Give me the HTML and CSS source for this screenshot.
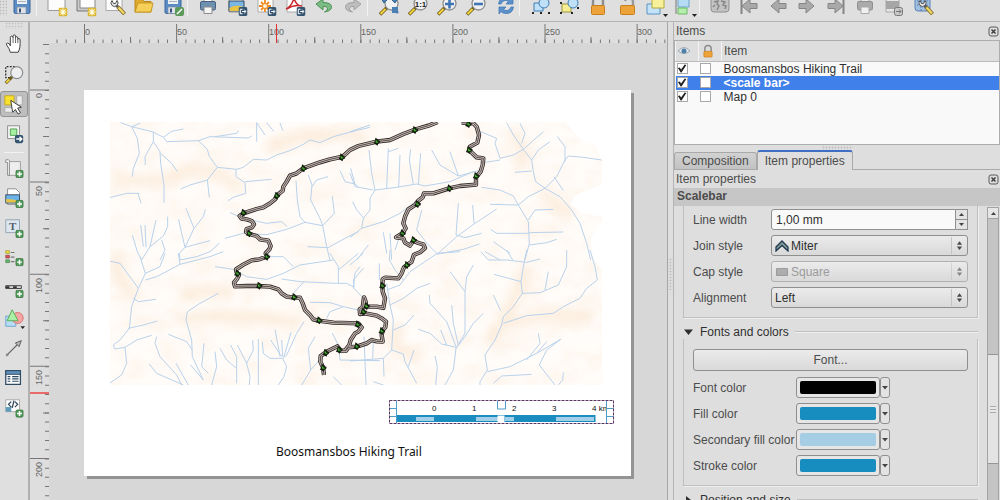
FILE: index.html
```html
<!DOCTYPE html>
<html lang="en">
<head>
  <meta charset="UTF-8">
  <meta name="viewport" content="width=device-width, initial-scale=1.0">
  <title>Composer</title>
  <link rel="stylesheet" href="styles.css">
</head>
<body>

  <!-- shared icon parts -->
  <svg class="defs" width="0" height="0" aria-hidden="true">
    <symbol id="star" viewBox="0 0 10 10">
      <rect width="10" height="10" rx="2" fill="#d9b52c"/>
      <path d="M5 1v8M1 5h8M2.2 2.2l5.6 5.6M7.8 2.2l-5.6 5.6" stroke="#fffbe0" stroke-width="1.2"/>
    </symbol>
    <symbol id="plus" viewBox="0 0 10 10">
      <rect x=".5" y=".5" width="9" height="9" rx="2" fill="#4f9a58" stroke="#39723f"/>
      <path d="M5 2v6M2 5h6" stroke="#fff" stroke-width="1.8"/>
    </symbol>
    <symbol id="export" viewBox="0 0 10 10">
      <rect width="10" height="10" rx="2" fill="#355470"/>
      <path d="M4.500 2.500H2v5h2.500M4 5h4M6.300 3l2 2-2 2" fill="none" stroke="#fff" stroke-width="1.1"/>
    </symbol>
    <symbol id="floppy" viewBox="0 0 24 24">
      <rect x="4" y="3" width="16" height="18.500" rx="1.500" fill="#5b8cc4" stroke="#3a649c"/>
      <path d="M7 3h10v9H7z" fill="#eef1f4"/><path d="M8 7h8M8 9.500h8" stroke="#aab3bd"/>
      <path d="M7 15h9v6.500H7z" fill="#dfe3e8" stroke="#7c8ea5" stroke-width=".7"/>
      <path d="M9 16.500h2v4H9z" fill="#38517a"/>
    </symbol>
    <symbol id="lens" viewBox="0 0 24 24">
      <path d="M3 22.500l7-7" stroke="#6c5b1c" stroke-width="3.600"/>
      <path d="M3.500 22l5-5" stroke="#f4d53c" stroke-width="2"/>
      <circle cx="14.500" cy="11.500" r="6.500" fill="#f0f1f2" stroke="#8d8d8d" stroke-width="1.300"/>
    </symbol>
    <symbol id="wrench" viewBox="0 0 24 24">
      <path d="M11 12l3 3" stroke="#555" stroke-width="3"/>
      <path d="M8 8.500a3.500 3.500 0 1 0 5 0l-1.500 3-2 0z" fill="#e6e6e6" stroke="#555"/>
      <path d="M14 15l6.500 7" stroke="#806820" stroke-width="4"/>
      <path d="M14.500 15.500l5.500 6" stroke="#f1d96a" stroke-width="2.200"/>
    </symbol>
    <symbol id="arrow" viewBox="0 0 24 24">
      <path d="M5 14l8-7v4.500h7v5h-7V21z" fill="#a9a9a9" stroke="#858585"/>
    </symbol>
    <symbol id="lock" viewBox="0 0 24 24">
      <path d="M7 14V9.500a5 5 0 0 1 10 0V14" fill="none" stroke="#8d8d8d" stroke-width="2.400"/>
      <rect x="5.500" y="13.500" width="13" height="9" rx="1" fill="#eda23a" stroke="#c77f1c"/>
    </symbol>
    <symbol id="close" viewBox="0 0 11 11">
      <rect x="1" y="1" width="9" height="9" rx="2" fill="none" stroke="#5a5a5a"/>
      <path d="M3.500 3.500l4 4M7.500 3.500l-4 4" stroke="#3e3e3e" stroke-width="1.500"/>
    </symbol>
    <symbol id="updown" viewBox="0 0 8 12">
      <path d="M4 1L7 5H1zM4 11L7 7H1z" fill="#4a4a4a"/>
    </symbol>
    <symbol id="marker" viewBox="-8 -10 16 20" overflow="visible">
      <path d="M-3 -10L3 -6 5 -3 9 -2 8 3 4 5 2 10 -4 6 -8 5 -5 0z" fill="#151c10"/>
      <path d="M-3 -3h4v3h3v3h-6z" fill="#3db52a"/>
    </symbol>
  </svg>

  <div class="app">
    <div class="toolbar">
      <span class="grip"></span>
      <button class="tool" aria-label="Save project"><svg><use href="#floppy"/></svg></button>
      <span class="sep"></span>
      <button class="tool" aria-label="New composer"><svg viewBox="0 0 24 24"><path d="M3 2h17v16.500H3z" fill="#fcfcfc" stroke="#9a9a9a"/><use href="#star" x="13.500" y="15.500" width="9" height="9"/></svg></button>
      <button class="tool" aria-label="Duplicate composer"><svg viewBox="0 0 24 24"><path d="M3 2h15v17H3z" fill="#c9c9c9" stroke="#777"/><path d="M6 2h15v14H6z" fill="#fcfcfc" stroke="#888"/><use href="#star" x="13.500" y="15.500" width="9" height="9"/></svg></button>
      <button class="tool" aria-label="Composer manager"><svg viewBox="0 0 24 24"><path d="M3 2h16v16.500H3z" fill="#fcfcfc" stroke="#aaa"/><use href="#wrench" x="1" y="0" width="24" height="24"/></svg></button>
      <button class="tool" aria-label="Add items from template"><svg viewBox="0 0 24 24"><path d="M3 20V7h7l2 2.500h7V20z" fill="#e0a92c" stroke="#b98818"/><path d="M3 20l3-9h15l-2 9z" fill="#f6cf58" stroke="#c79a26"/></svg></button>
      <button class="tool" aria-label="Save as template"><svg viewBox="0 0 24 24"><use href="#floppy" width="24" height="24"/><rect x="14" y="15" width="9" height="9" rx="2" fill="#5c9a5c"/><path d="M16 22l5-5" stroke="#fff" stroke-width="1.500"/></svg></button>
      <span class="sep"></span>
      <button class="tool" aria-label="Print"><svg viewBox="0 0 24 24"><path d="M8 3h8v7H8z" fill="#fff" stroke="#8c8c8c"/><rect x="4.500" y="9.500" width="15" height="8.500" rx="1.500" fill="#6d8fb0" stroke="#46617e"/><path d="M8 15h8v6.500H8z" fill="#f4f4f4" stroke="#8c8c8c"/></svg></button>
      <button class="tool" aria-label="Export as image"><svg viewBox="0 0 24 24"><path d="M4 3h14v17H4z" fill="#fff" stroke="#999"/><path d="M4 9h15v10H4z" fill="#79b6e6" stroke="#33485c"/><path d="M4.500 16q6-4 14-1v4h-14z" fill="#e8c443"/><use href="#export" x="13.500" y="15" width="9" height="9"/></svg></button>
      <button class="tool" aria-label="Export as SVG"><svg viewBox="0 0 24 24"><path d="M4 3h15v17H4z" fill="#fff" stroke="#aaa"/><path d="M11 8v12M5 14h12M7 10l8 8M15 10l-8 8" stroke="#ef8a1e" stroke-width="1.800"/><circle cx="11" cy="14" r="2.500" fill="#fff3da" stroke="#ef8a1e"/><use href="#export" x="13.500" y="15" width="9" height="9"/></svg></button>
      <button class="tool" aria-label="Export as PDF"><svg viewBox="0 0 24 24"><path d="M4 3h15v17H4z" fill="#fff" stroke="#aaa"/><path d="M3 17q6-3 8-11q2 8 8 8q-8-2-15 3" fill="none" stroke="#c8282d" stroke-width="1.500"/><use href="#export" x="13.500" y="15" width="9" height="9"/></svg></button>
      <button class="tool" aria-label="Undo"><svg viewBox="0 0 24 24"><path d="M4 12l7-5v3.500q9 0 8.500 5-.5 3.500-7 4.500 4-2 3-4t-4.500-1.500V18z" fill="#7dbb84" stroke="#4b9257"/></svg></button>
      <button class="tool" aria-label="Redo"><svg viewBox="0 0 24 24"><path d="M20 12l-7-5v3.500q-9 0-8.500 5 .5 3.500 7 4.500-4-2-3-4t4.500-1.500V18z" fill="#bdbdbd" stroke="#a2a2a2"/></svg></button>
      <span class="sep wide"></span>
      <button class="tool" aria-label="Zoom full"><svg viewBox="0 0 24 24"><use href="#lens" width="24" height="24"/><path d="M4 6l7 1-4 4zM21 6l-7 1 4 4zM21 21l-6-1 5-5z" fill="#4b80b5" stroke="#33618e"/><path d="M15 15h6v6h-6z" fill="#4b80b5"/></svg></button>
      <button class="tool" aria-label="Zoom 1:1"><svg viewBox="0 0 24 24"><use href="#lens" width="24" height="24"/><text class="ratio" x="14.500" y="15" text-anchor="middle">1:1</text></svg></button>
      <button class="tool" aria-label="Zoom in"><svg viewBox="0 0 24 24"><use href="#lens" width="24" height="24"/><path d="M14.500 7.500v9M10 12h9" stroke="#3f74b5" stroke-width="2.600"/></svg></button>
      <button class="tool" aria-label="Zoom out"><svg viewBox="0 0 24 24"><use href="#lens" width="24" height="24"/><path d="M10 12h9" stroke="#3f74b5" stroke-width="2.600"/></svg></button>
      <button class="tool" aria-label="Refresh"><svg viewBox="0 0 24 24"><path d="M5.500 12q1-7 8-6.500 3 0 4.500 2l2-2v6.500h-7l2.500-2.500q-5-3-7.500 2.500zM20.500 15q-1 7-8 6.500-3 0-4.500-2l-2 2.500V15h7l-2.500 2.500q5 3 7.500-2.500z" fill="#5b92ce" stroke="#3d71ad" stroke-width=".7"/></svg></button>
      <span class="sep"></span>
      <button class="tool" aria-label="Group"><svg viewBox="0 0 24 24"><path d="M6 11h9v8H6z" fill="#bfe0f7" stroke="#3d7fb8"/><circle cx="16" cy="11" r="5" fill="#bfe0f7" stroke="#3d7fb8"/><path d="M4 20h2v2H4zM20 20h2v2h-2zM20 5h2v2h-2zM4 5h2v2H4zM12 20h2v2h-2z" fill="#222"/></svg></button>
      <button class="tool" aria-label="Ungroup"><svg viewBox="0 0 24 24"><path d="M5 12h9v8H5z" fill="#f6ee8f" stroke="#9c9340"/><circle cx="16" cy="11" r="5" fill="#bfe0f7" stroke="#3d7fb8"/><path d="M3 10h2v2H3zM3 20h2v2H3zM14 20h2v2h-2zM20 5h2v2h-2zM10 5h2v2h-2zM20 15h2v2h-2z" fill="#222"/></svg></button>
      <button class="tool" aria-label="Lock"><svg><use href="#lock"/></svg></button>
      <button class="tool" aria-label="Unlock"><svg viewBox="0 0 24 24"><path d="M10 9q1-3 4-3 4 0 4 4v4" fill="none" stroke="#9a9a9a" stroke-width="2.400"/><rect x="5.500" y="13.500" width="14" height="9" rx="1" fill="#eda23a" stroke="#c77f1c"/></svg></button>
      <button class="tool" aria-label="Raise"><svg viewBox="0 0 24 24"><path d="M3 12h13v10H3z" fill="#c5e3f8" stroke="#5893c4"/><path d="M8 3h12v13H8z" fill="#f8f19c" stroke="#b5a93e"/><path d="M19 22h5l-2.500 3z" fill="#222"/></svg></button>
      <button class="tool" aria-label="Align"><svg viewBox="0 0 24 24"><path d="M3 3v19" stroke="#777"/><path d="M5 3h11v12H5z" fill="#b6dcf5" stroke="#6aa2cf"/><path d="M5 16h9v6H5z" fill="#b4f0ac" stroke="#6cb964"/><path d="M19 22h5l-2.500 3z" fill="#222"/></svg></button>
      <span class="sep"></span>
      <button class="tool" aria-label="Preview atlas"><svg viewBox="0 0 24 24"><rect x="3" y="6" width="18" height="14" rx="3" fill="#c3c3c3" stroke="#8f8f8f"/><path d="M6 10l4-1-1 3 2 2-2 4M13 9l4 1-2 3 3 1-1 3M7 13l-2 2" fill="none" stroke="#858585" stroke-width="1.400"/></svg></button>
      <button class="tool" aria-label="First feature"><svg viewBox="0 0 24 24"><path d="M4.500 5v17" stroke="#858585" stroke-width="2"/><use href="#arrow" width="24" height="24"/></svg></button>
      <button class="tool" aria-label="Previous feature"><svg><use href="#arrow"/></svg></button>
      <button class="tool" aria-label="Next feature"><svg viewBox="0 0 24 24"><use href="#arrow" width="24" height="24" transform="matrix(-1 0 0 1 24 0)"/></svg></button>
      <button class="tool" aria-label="Last feature"><svg viewBox="0 0 24 24"><path d="M19.500 5v17" stroke="#858585" stroke-width="2"/><use href="#arrow" width="24" height="24" transform="matrix(-1 0 0 1 24 0)"/></svg></button>
      <button class="tool" aria-label="Print atlas"><svg viewBox="0 0 24 24"><path d="M8 3h8v7H8z" fill="#e8e8e8" stroke="#aaa"/><rect x="4.500" y="9.500" width="15" height="8.500" rx="1.500" fill="#aaa" stroke="#909090"/><path d="M8 15h8v6.500H8z" fill="#f0f0f0" stroke="#aaa"/></svg></button>
      <button class="tool" aria-label="Export atlas"><svg viewBox="0 0 24 24"><path d="M4 3h13v17H4z" fill="#e6e6e6" stroke="#aaa"/><path d="M4 9h13v8H4z" fill="#a6a6a6"/><rect x="12.500" y="15.500" width="8" height="8" rx="2" fill="#c9c9c9" stroke="#777"/><path d="M14 19.500h5M17 17.500l2 2-2 2" fill="none" stroke="#777"/></svg></button>
      <button class="tool" aria-label="Atlas settings"><svg viewBox="0 0 24 24"><rect x="4" y="5" width="15" height="14" rx="3" fill="#9fc0e2" stroke="#5b83b0"/><path d="M6 9h11M6 13h11M10 5v14" stroke="#5b83b0" stroke-dasharray="2 1"/><use href="#wrench" x="1" y="0" width="24" height="24"/></svg></button>
    </div>

    <div class="main">
      <div class="sidebar">
        <span class="grip"></span>
        <button class="tool" aria-label="Pan"><svg viewBox="0 0 24 24"><path d="M8 21q-1-4-4-8-1-2 1-2t3 3V5q0-1.500 1.300-1.500T11 5V3.500Q11 2 12.300 2t1.400 1.500V5q0-1 1.200-1t1.300 1.500V7q0-1 1.200-1t1.200 1.500q.6 9-2 13.500z" fill="#fff" stroke="#333"/><path d="M11 5v6M13.700 5v6M16.200 7v4" stroke="#333" stroke-width=".8"/></svg></button>
        <button class="tool" aria-label="Zoom"><svg viewBox="0 0 24 24"><path d="M13 4H3v12h6" fill="none" stroke="#222" stroke-width="1.300" stroke-dasharray="2 1.500"/><path d="M3 22l7-7" stroke="#6c5b1c" stroke-width="3.400"/><path d="M3.500 21.500l3.500-3.500" stroke="#f4d53c" stroke-width="2"/><circle cx="15" cy="10.500" r="6.500" fill="#eceeef" stroke="#8d8d8d" stroke-width="1.300"/></svg></button>
        <button class="tool active" aria-label="Select item"><svg viewBox="0 0 24 24"><path d="M2 3h10v10H2z" fill="#f9e12f" stroke="#c7a71b"/><path d="M15 3h6v10h-6z" fill="#eee" stroke="#aaa"/><path d="M2 16h11v5H2z" fill="#eee" stroke="#aaa"/><path d="M8.500 8l2 13 3-3 3 5 2.500-1.500-3-5 4-1z" fill="#fff" stroke="#333"/></svg></button>
        <button class="tool" aria-label="Move content"><svg viewBox="0 0 24 24"><path d="M5 3h13v14H5z" fill="#f4f4f4" stroke="#888"/><path d="M8 6.500h7v7H8z" fill="#a6efa2" stroke="#4da04a"/><rect x="13" y="13" width="9" height="9" rx="2" fill="#355470"/><path d="M14.500 17.500h5M18 15l2.500 2.500L18 20" fill="none" stroke="#fff" stroke-width="1.500"/></svg></button>
        <span class="line"></span>
        <button class="tool" aria-label="Add map"><svg viewBox="0 0 24 24"><path d="M6 5h13v15H6z" fill="#eee" stroke="#999"/><path d="M3 3h3q2 1 1 3v14H5V6H3z" fill="#f6f6f6" stroke="#888"/><use href="#plus" x="13.500" y="14" width="9" height="9"/></svg></button>
        <button class="tool" aria-label="Add image"><svg viewBox="0 0 24 24"><path d="M5 2h9l4 4v13H5z" fill="#fff" stroke="#888"/><path d="M3 8.500h15v9H3z" fill="#6cb3e8" stroke="#33485c"/><path d="M3.500 13q7 0 14 2v2h-14z" fill="#e8c443"/><use href="#plus" x="13.500" y="14" width="9" height="9"/></svg></button>
        <button class="tool" aria-label="Add label"><svg viewBox="0 0 24 24"><path d="M3 3h15v14H3z" fill="#dce6ee" stroke="#93a3b0"/><text class="letter" x="10.500" y="14" text-anchor="middle">T</text><use href="#plus" x="13.500" y="14" width="9" height="9"/></svg></button>
        <button class="tool" aria-label="Add legend"><svg viewBox="0 0 24 24"><path d="M3 4h4v3H3z" fill="#f2e13c" stroke="#99902c" stroke-width=".7"/><path d="M3 9h4v3H3z" fill="#d8545c" stroke="#8d353a" stroke-width=".7"/><path d="M3 14h4v3H3z" fill="#63b96c" stroke="#3d7f44" stroke-width=".7"/><path d="M8.500 6h4M8.500 11h4M8.500 16h4" stroke="#777" stroke-width="1.200"/><use href="#plus" x="13.500" y="12" width="9" height="9"/></svg></button>
        <button class="tool" aria-label="Add scalebar"><svg viewBox="0 0 24 24"><path d="M3 9.500h17v3H3z" fill="#ddd" stroke="#333"/><path d="M3 11h4M11 11h4" stroke="#333" stroke-width="2"/><use href="#plus" x="13.500" y="14" width="9" height="9"/></svg></button>
        <button class="tool" aria-label="Add shape"><svg viewBox="0 0 24 24"><path d="M3 10h11v11H3z" fill="#b7dcf5" stroke="#6aa2cf"/><circle cx="16" cy="12" r="6" fill="#f6a6a4" stroke="#d2716f"/><path d="M10 3l6.500 12h-12z" fill="#a9efa6" stroke="#55a552"/><path d="M19 21h5l-2.500 3z" fill="#222"/></svg></button>
        <button class="tool" aria-label="Add arrow"><svg viewBox="0 0 24 24"><path d="M4 20L17 7" stroke="#666" stroke-width="1.400"/><path d="M20 4l-2.500 6.500-4-4z" fill="#bbb" stroke="#555"/><circle cx="4.500" cy="19.500" r="1.500" fill="#888"/></svg></button>
        <button class="tool" aria-label="Add attribute table"><svg viewBox="0 0 24 24"><path d="M3 4h16v15H3z" fill="#fff" stroke="#2f4a63" stroke-width="1.400"/><path d="M3 4h16v4H3z" fill="#5f8fb9" stroke="#2f4a63"/><path d="M5 10.500h3M5 13h3M5 15.500h3M10 10.500h7M10 13h7M10 15.500h7" stroke="#2f4a63" stroke-width="1.200"/></svg></button>
        <button class="tool" aria-label="Add HTML frame"><svg viewBox="0 0 24 24"><path d="M3 3h15v13H3z" fill="#fff" stroke="#a5a5a5"/><path d="M3 11h6v5H3z" fill="#5f9dbb"/><path d="M9 5L6 8l3 3M13 5l3 3-3 3M12 4l-2 8" fill="none" stroke="#33485c" stroke-width="1.400"/><use href="#plus" x="13.500" y="13.500" width="9" height="9"/></svg></button>
      </div>

      <div class="workspace">
        <svg class="ruler-top">
          <path d="M26.500 19.500H640" class="minor"/>
          <path d="M100 18H640" class="half"/>
          <path d="M54 11.500H640" class="major"/>
          <text x="55" y="13">0</text><text x="147" y="13">50</text><text x="239" y="13">100</text>
          <text x="331" y="13">150</text><text x="423" y="13">200</text><text x="515" y="13">250</text><text x="607" y="13">300</text>
          <path d="M246.500 2v19" class="cursor"/>
        </svg>
        <svg class="ruler-left">
          <path d="M17 1V460" class="minor"/>
          <path d="M16 1V460" class="half"/>
          <path d="M9.500 46.500V460" class="major"/>
          <text transform="translate(12 55) rotate(-90)">0</text>
          <text transform="translate(12 153) rotate(-90)">50</text>
          <text transform="translate(12 250) rotate(-90)">100</text>
          <text transform="translate(12 342) rotate(-90)">150</text>
          <text transform="translate(12 434) rotate(-90)">200</text>
          <path d="M0 350h19" class="cursor"/>
        </svg>

        <div class="canvas">
          <div class="paper">
            <svg class="map" viewBox="30 36 1476 789" role="img" aria-label="Map 0">
              <defs>
                <filter id="soft" x="-10%" y="-10%" width="120%" height="120%"><feGaussianBlur stdDeviation="14"/></filter>
                <filter id="relief" x="0" y="0" width="100%" height="100%">
                  <feTurbulence type="fractalNoise" baseFrequency=".012 .018" numOctaves="4" seed="8"/>
                  <feColorMatrix values="0 0 0 0 .98  0 0 0 0 .88  0 0 0 0 .78  1.200 0 0 0 -.42"/>
                </filter>
              </defs>
              <rect x="30" y="36" width="1476" height="789" fill="#fffcf9"/>
              <rect x="30" y="36" width="1476" height="789" filter="url(#relief)"/>
              <g class="hills" filter="url(#soft)">
                <path d="M40 200Q150 230 240 190T420 240"/><path d="M240 560Q330 530 400 550"/><path d="M240 630Q400 600 600 640"/>
                <path d="M500 110Q640 60 800 80"/><path d="M1330 240Q1380 320 1420 300"/><path d="M1200 650Q1360 600 1480 620"/>
                <path d="M1160 700Q1230 620 1280 470"/><path d="M900 650Q850 720 960 740"/><path d="M1230 70Q1300 120 1250 170"/>
                <path d="M60 420Q30 500 110 560"/>
              </g>
              <path d="M1506 36v120l-20-50-40-15-30-30-20-25zM1506 225l-30 10-50 20-15 30 40 25 55 10zM1506 330l-35 60 10 60 25 30z" fill="#fff"/>
              <g class="rivers">
                <path d="M62 38L95 50 120 40M95 50L160 66 190 82 215 64 250 57M190 82L200 95 295 92 330 80 445 84 455 78M345 80L410 70 415 62"/>
                <path d="M95 50L112 85 118 130 100 175 97 200M160 66V95L180 125 182 160 192 225V278M160 95L135 140 136 165M182 130L215 160 232 185"/>
                <path d="M295 92L322 118 328 140 352 172 410 178 430 172 460 148 500 150 530 135 570 122 610 103 630 90 660 98 700 80 775 60 810 52"/>
                <path d="M352 172L322 210 270 225 242 237M322 210L328 262M408 178V200L435 218 437 250 400 262 384 272M435 215L515 208"/>
                <path d="M28 263L80 250H118M114 250L123 280M470 38V95M470 38L495 75M500 38L522 65M540 38L548 62"/>
                <path d="M97 375L112 425 125 450 150 410 190 378 203 350V320M122 345L130 410M135 345L138 412M168 330L150 410M185 390L195 420 180 450"/>
                <path d="M236 328L245 370 255 412 238 430 240 450M258 295L282 355 310 320 316 298M282 355L255 412 330 392M375 385L430 370 500 374 560 358 615 337 668 347"/>
                <path d="M390 308L430 325 500 340 545 335 562 350M588 212L592 270 600 320 615 337M625 195L636 225 632 270 660 325 668 347 680 410 690 450M636 230L650 210 684 200M697 258L703 310 668 347M622 410L684 413 735 385 775 365"/>
                <path d="M720 182L735 215 765 222 775 230M752 175L765 222M358 400L330 425 290 440 240 450"/>
                <path d="M28 453L60 460 115 535 136 490 120 440M136 510L170 500 240 463 330 440 370 425M136 490L180 470 195 430M240 463L235 430"/>
                <path d="M115 535L95 590 88 655 60 690 40 705 45 717 75 712 110 690 155 676M100 565L115 575 168 568M85 655L130 645 172 633M75 712L80 760 65 795 28 820"/>
                <path d="M355 550L300 580 262 605 258 630 275 690 277 740 310 810M205 673L260 695 277 720M170 680L165 700 180 740 230 795 245 825M148 762L170 790 250 825M228 760L265 825M312 700L305 770 325 790M272 765L310 810"/>
                <path d="M345 725L350 770 335 825M360 715L380 750 410 775V820M392 705L410 740V775M412 705L440 760 450 800 448 825M440 760L460 720 458 690M475 687V825M487 695L490 730 510 745 548 745 560 735 590 670 612 635"/>
                <path d="M512 690L545 740M525 658L540 740M545 690L548 740M573 667L552 740M548 745L560 770 552 800 535 825M645 680L625 715 632 780 605 825M632 780L658 750"/>
                <path d="M345 470L400 478 440 500 500 508 550 490 600 465 700 450M500 440L550 440 580 470M545 507L600 515 710 520 740 520 760 530M715 520L715 470 690 430M715 480L775 430M760 535L765 490 780 470M580 550L612 515"/>
                <path d="M630 577L690 578 730 590 775 600M680 625L690 605 730 590M697 670L715 705 720 750 840 752M700 800L725 825"/>
              </g>
              <g class="rivers" transform="translate(750 0)">
                <path d="M380 60L440 85 435 100 450 145 490 135 520 118 545 150 550 185 557 215 585 235 620 200 645 150 655 138 700 142 755 150"/>
                <path d="M470 38L490 75 520 118 580 65M510 40L525 70 515 100M400 158L450 150M622 80L645 110 645 155M600 95L565 120 545 150M495 187L545 183M612 200L640 242"/>
                <path d="M57 120L65 190 75 240 140 232 200 222 225 228 300 215 370 185M115 115L110 235M115 125L145 115M150 135L146 232M182 118L178 150 190 225M212 130L205 225M245 120L270 165 325 198 300 125M325 198L400 178"/>
                <path d="M75 240L60 265 60 300 40 325 35 355 0 382M8 275L20 300 42 325M35 355L100 335 150 310 200 272M0 190L15 230 70 240M0 65L60 45"/>
                <path d="M395 232L450 240 490 258 505 285 535 260 585 235M505 285L420 283M505 285L535 335 538 400 525 450M535 330L555 300 610 298M538 368L640 366M538 370L440 370 422 358M538 405L590 398 620 388"/>
                <path d="M585 235L630 260 665 300 690 340 710 400 722 450M215 300L200 360 235 405 262 432 320 380 375 340 440 297M325 280L318 375 345 383 395 370M368 285L372 340M262 432L340 418 388 402M100 367L110 430M120 370L125 450M150 375L135 420M55 405L20 450M405 425L450 450M430 395L480 430"/>
              </g>
              <g class="rivers" transform="translate(750 420)">
                <path d="M393 5L415 30 470 30 530 37 570 27M470 0L488 30M530 0L520 50 513 95 517 130 570 128 625 105 650 50 650 0M595 65L585 120M432 73L513 95M517 130L490 170 460 200 455 225 435 270 405 315 412 360 390 395 390 405"/>
                <path d="M720 0L735 50 742 90 710 115 690 145 640 170 610 190 530 197 460 220M412 365L480 350 520 330 560 310 632 268M565 250L570 280 530 330M590 275L560 310M632 268L590 300 568 345 615 405M640 367L638 390 625 405M430 400L455 378 545 373"/>
                <path d="M300 65L345 125 350 80 370 45M345 125V250L318 295 310 360 285 405M400 190L370 220 345 260 318 295M238 135L240 160 290 215 318 290M305 165L310 220 325 285M205 238L240 250 275 282 318 292M272 240L290 285M430 135L452 182"/>
                <path d="M120 165L160 145 200 115 240 100M120 0L118 30 135 60 160 90M110 100L120 165 130 210 125 300 160 312 165 335 200 400M130 240L165 225 192 195M125 300L100 325 0 333M42 260L48 405M70 270L68 325M100 325L102 380M192 300L175 350M255 318L262 350 257 405M70 395L100 405M0 45L40 10M40 55L10 90 12 115 35 140M110 120L150 105 180 65 262 10 330 5M88 40V90"/>
              </g>
              <g class="trail">
                <path id="loop" d="M1013 36L985 47 950 57 910 72 870 90 830 95 775 108 750 120 728 140 690 148 660 157 610 175 590 190 570 197 560 215 550 230 548 242 530 257 525 268 510 280 490 292 470 297 430 310 419 318 425 326 440 328 455 333 462 343 456 352 440 357 438 366 448 372 470 378 480 388 505 392 512 408 508 418 497 430 500 440 478 448 455 451 430 464 408 478 410 488 417 495 412 505 402 518 405 529 440 528 475 528 510 530 535 538 545 550 560 560 582 563 600 563 608 580 615 600 630 615 640 628 655 632 700 638 775 640 785 652 775 665 765 670 752 690 748 705 735 722"/>
                <path id="track" d="M672 795L669 772 661 755 662 738 680 725 712 709 722 722 738 722 745 712 770 710 800 700 815 690 830 694 848 695 845 675 848 660 856 652 858 635 845 625 830 617 795 610 780 612 779 598 788 592 792 562 797 575 798 590 830 590 850 594 855 565 848 545 847 528 848 508 855 503 895 505 905 490 912 472 935 455 942 434 960 427 975 414 970 403 955 399 940 392 930 407 915 398 910 385 888 382 907 370 917 355 910 340 915 320 925 298 945 285 955 272 968 262 972 250 1000 250 1048 235 1080 228 1128 224 1128 202 1142 185 1148 165 1150 145 1130 142 1107 120 1110 110 1132 98 1137 75 1130 50 1120 40 1085 38"/>
              </g>
              <g class="trail-inner"><use href="#loop"/><use href="#track"/></g>
              <g class="trail-core"><use href="#loop"/><use href="#track"/></g>
              <g id="markers"></g>
            </svg>

            <svg class="scalebar" viewBox="0 0 226 24" role="img" aria-label="Scale bar">
              <path d="M7.500 15h199v7h-199z" fill="#1a8cbd"/>
              <path d="M27 17h18v4H27zM87 17h22v4H87zM116 17h9v4h-9zM167 17h38v4h-38z" fill="#a3d0e8"/>
              <g class="digits"><text x="43" y="11">0</text><text x="83" y="11">1</text><text x="123" y="11">2</text><text x="163" y="11">3</text><text x="203" y="11">4 km</text></g>
              <path d="M218 2h6v20h-6z" fill="#fff"/>
              <path d="M108.500 15.500h7v8h-7z" fill="#fff"/>
              <path d="M7.500 1v22M1 8.500h6.500M1 16.500h6.500M217.500 1v22M217.500 8.500h7M217.500 16.500h7M108.500 1v8h8V1" fill="none" stroke="#4d9cc9"/>
              <path d="M.500 .500h224v23H.500z" fill="none" stroke="#5a3563" stroke-dasharray="3 1"/>
            </svg>
            <div class="map-title">Boosmansbos Hiking Trail</div>
          </div>
        </div>
      </div>

      <div class="splitter"></div>

      <div class="panel">
        <div class="dock-title">Items <button class="close" aria-label="Close items"><svg><use href="#close"/></svg></button></div>
        <div class="item-list">
          <table>
            <thead>
              <tr>
                <th class="check" aria-label="Visible"><svg width="12" height="10" viewBox="0 0 12 10"><path d="M0 5q6-7 12 0q-6 5-12 0z" fill="#e3e9ee" stroke="#8e9ba6" stroke-width=".8"/><circle cx="6" cy="5" r="2.500" fill="#4f7fa8"/></svg></th>
                <th class="check" aria-label="Locked"><svg width="14" height="14" viewBox="2 2 20 22"><use href="#lock" width="24" height="24"/></svg></th>
                <th>Item</th>
              </tr>
            </thead>
            <tbody>
              <tr><td><input type="checkbox" aria-label="Show trail label" checked></td><td><input type="checkbox" aria-label="Lock trail label"></td><td>Boosmansbos Hiking Trail</td></tr>
              <tr class="selected"><td><input type="checkbox" aria-label="Show scale bar" checked></td><td><input type="checkbox" aria-label="Lock scale bar"></td><td>&lt;scale bar&gt;</td></tr>
              <tr><td><input type="checkbox" aria-label="Show map" checked></td><td><input type="checkbox" aria-label="Lock map"></td><td>Map 0</td></tr>
            </tbody>
          </table>
        </div>
        <div class="hgrip"></div>

        <div class="tabs">
          <button class="tab">Composition</button>
          <button class="tab current">Item properties</button>
        </div>
        <div class="dock-title">Item properties <button class="close" aria-label="Close item properties"><svg><use href="#close"/></svg></button></div>
        <div class="heading">Scalebar</div>

        <div class="scroll">
          <div class="form">
            <div class="group first">
              <div class="row">
                <label for="lineWidth">Line width</label>
                <div class="field">
                  <input type="text" id="lineWidth" value="1,00 mm">
                  <div class="spin"><button aria-label="Increase"><svg viewBox="0 0 7 5"><path d="M3.500 1l2.500 3H1z"/></svg></button><button aria-label="Decrease"><svg viewBox="0 0 7 5"><path d="M3.500 4L6 1H1z"/></svg></button></div>
                </div>
              </div>
              <div class="row">
                <label for="joinStyle">Join style</label>
                <div class="field">
                  <select id="joinStyle" class="with-icon"><option>Miter</option></select>
                  <svg class="option-icon" viewBox="0 0 14 12"><path d="M1 7l6-6 6 6v4L7 5.500 1 11z" fill="#7f9c9a" stroke="#22384f" stroke-width="1.300"/></svg>
                  <svg class="updown"><use href="#updown"/></svg>
                </div>
              </div>
              <div class="row">
                <label for="capStyle">Cap style</label>
                <div class="field off">
                  <select id="capStyle" class="with-icon" disabled><option>Square</option></select>
                  <svg class="option-icon" viewBox="0 0 14 12"><path d="M1.500 2.500h11v7h-11z" fill="#8b8b8b" stroke="#6e6e6e"/></svg>
                  <svg class="updown"><use href="#updown"/></svg>
                </div>
              </div>
              <div class="row">
                <label for="alignment">Alignment</label>
                <div class="field">
                  <select id="alignment"><option>Left</option></select>
                  <svg class="updown"><use href="#updown"/></svg>
                </div>
              </div>
            </div>

            <div class="group-title"><svg width="10" height="8"><path d="M1 1.500h9L5.500 7z" fill="#2f2f2f"/></svg>Fonts and colors</div>
            <div class="group">
              <button class="font-button">Font...</button>
              <div class="row"><span class="color-label" id="c1">Font color</span><button class="swatch" aria-labelledby="c1"><span class="black"></span></button><button class="drop" aria-label="Font color menu"></button></div>
              <div class="row"><span class="color-label" id="c2">Fill color</span><button class="swatch" aria-labelledby="c2"><span class="blue"></span></button><button class="drop" aria-label="Fill color menu"></button></div>
              <div class="row"><span class="color-label" id="c3">Secondary fill color</span><button class="swatch" aria-labelledby="c3"><span class="light"></span></button><button class="drop" aria-label="Secondary fill color menu"></button></div>
              <div class="row"><span class="color-label" id="c4">Stroke color</span><button class="swatch" aria-labelledby="c4"><span class="blue"></span></button><button class="drop" aria-label="Stroke color menu"></button></div>
            </div>
            <div class="group-title"><svg width="10" height="8"><path d="M3 0v8l5-4z" fill="#2f2f2f"/></svg>Position and size</div>
          </div>
          <div class="scrollbar">
            <button class="scroll-up" aria-label="Scroll up"><svg viewBox="0 0 7 5"><path d="M3.500 1l2.500 3H1z"/></svg></button>
            <div class="thumb"></div>
          </div>
        </div>
      </div>
    </div>
  </div>

  <script src="script.js"></script>
</body>
</html>
```
FILE: styles.css
```css
body {
  margin: 0;
  background-color: #dedede;
  color: #4c4c4c;
  font-family: "Liberation Sans", Arial, sans-serif;
  font-size: 12px;
}

* {
  box-sizing: border-box;
}

button, input, select {
  font: inherit;
  color: inherit;
  margin: 0;
}

button {
  border: none;
  padding: 0;
  background: none;
}

.defs {
  position: absolute;
}

.app {
  display: flex;
  flex-direction: column;
  height: 100vh;
  overflow: hidden;
}

/* top toolbar */
.toolbar {
  display: flex;
  align-items: flex-end;
  height: 22px;
  flex: none;
  padding-bottom: 5px;
  overflow: hidden;
  background-color: #dfdfdf;
  border-bottom: 1px solid #b4b4b4;
}

.tool {
  display: flex;
  align-items: center;
  justify-content: center;
  flex: none;
  width: 29px;
  height: 24px;
}

.tool svg {
  width: 24px;
  height: 24px;
  flex: none;
  overflow: visible;
}

.toolbar .grip {
  width: 7px;
  height: 22px;
  flex: none;
  background: radial-gradient(#bbb 40%, transparent 50%) 2px 0 / 3px 3px;
}

.sep {
  width: 6px;
  height: 26px;
  flex: none;
  border-left: 1px solid #f2f2f2;
}

.sep.wide {
  width: 7px;
}

.ratio {
  font-size: 8px;
  font-weight: bold;
  fill: #222;
}

.letter {
  font-family: "Liberation Serif", serif;
  font-size: 12px;
  font-weight: bold;
  fill: #56616b;
}

.main {
  display: flex;
  flex: 1;
  min-height: 0;
}

/* left tools */
.sidebar {
  display: flex;
  flex-direction: column;
  align-items: center;
  width: 30px;
  flex: none;
  overflow: hidden;
  background-color: #dfdfdf;
  border-right: 2px solid #b1b1b1;
}

.sidebar .grip {
  width: 18px;
  height: 7px;
  flex: none;
  background: radial-gradient(#c2c2c2 40%, transparent 50%) 0 0 / 3px 3px;
}

.sidebar .tool {
  width: 28px;
  height: 30px;
}

.sidebar .tool svg {
  width: 22px;
  height: 22px;
}

.sidebar .tool.active {
  height: 26px;
  margin: 2px 0;
  border: 1px solid #949494;
  border-radius: 3px;
  background-color: #bebebe;
}

.line {
  width: 20px;
  height: 4px;
  flex: none;
  border-bottom: 1px solid #f2f2f2;
}

/* rulers and canvas */
.workspace {
  display: grid;
  grid-template: 21px 1fr / 19px 1fr;
  flex: 1;
  min-width: 0;
  overflow: hidden;
  border-right: 1px solid #a6a6a6;
}

.ruler-top {
  grid-column: 1 / 3;
  width: 100%;
  height: 21px;
}

.ruler-left {
  width: 19px;
  height: 100%;
}

.ruler-top path, .ruler-left path {
  fill: none;
  stroke: #777;
}

.workspace .minor {
  stroke-width: 4px;
  stroke-dasharray: 1 8.21;
}

.workspace .half {
  stroke-width: 6px;
  stroke-dasharray: 1 91.1;
}

.workspace .major {
  stroke-width: 19px;
  stroke-dasharray: 1 91.1;
}

.ruler-top .cursor {
  stroke: #e03030;
}

.ruler-left .cursor {
  stroke: #e86a6a;
  stroke-width: 2px;
}

.ruler-top text, .ruler-left text {
  font-size: 9px;
  fill: #666;
}

.canvas {
  padding: 47px 35px;
  overflow: hidden;
  background-color: #d7d7d7;
}

.paper {
  position: relative;
  width: 547px;
  height: 386px;
  background-color: #fff;
  box-shadow: 3px 3px 0 #949494;
}

.map {
  position: absolute;
  left: 26px;
  top: 32px;
  width: 492px;
  height: 263px;
}

.hills {
  fill: none;
  stroke: #fbe6d0;
  stroke-width: 36px;
  opacity: 0.6;
}

.rivers {
  fill: none;
  stroke: #b9d2ec;
  stroke-width: 3px;
  stroke-linejoin: round;
}

.trail, .trail-inner, .trail-core {
  fill: none;
  stroke: #2b2524;
  stroke-width: 13px;
  stroke-linejoin: round;
}

.trail-inner {
  stroke: #c9bcb6;
  stroke-width: 8px;
}

.trail-core {
  stroke: #5b504c;
  stroke-width: 3px;
}

.scalebar {
  position: absolute;
  left: 305px;
  top: 310px;
  width: 226px;
  height: 24px;
}

.digits {
  font-size: 8px;
  fill: #111;
}

.map-title {
  position: absolute;
  left: 192px;
  top: 353px;
  color: #111;
  font-family: "Noto Sans", sans-serif;
  font-size: 12px;
  line-height: 18px;
  white-space: nowrap;
}

.splitter {
  width: 5px;
  flex: none;
  background: radial-gradient(#bbb 40%, transparent 50%) 1px 0 / 3px 3px content-box;
  padding: 236px 0 210px;
}

/* right panel */
.panel {
  display: flex;
  flex-direction: column;
  width: 327px;
  flex: none;
  border-left: 1px solid #b5b5b5;
}

.dock-title {
  display: flex;
  align-items: center;
  justify-content: space-between;
  height: 18px;
  flex: none;
  padding: 0 1px 0 2px;
}

.close, .close svg {
  display: block;
  width: 11px;
  height: 11px;
}

.item-list {
  height: 105px;
  flex: none;
  background-color: #f9f9f9;
  border: 1px solid #adadad;
}

.item-list table {
  width: 100%;
  border-collapse: collapse;
  table-layout: fixed;
}

.item-list th {
  height: 20px;
  padding: 0 0 0 2px;
  background-color: #dedede;
  border-bottom: 1px solid #bbb;
  border-left: 1px solid #f4f4f4;
  font-weight: normal;
  text-align: left;
}

.item-list th.check {
  width: 23px;
}

.item-list th svg {
  display: block;
}

.item-list td {
  height: 14px;
  padding: 0 0 0 1px;
  line-height: 14px;
  color: #303030;
}

.item-list td:last-child {
  padding-left: 2px;
}

.item-list .selected td {
  background-color: #4080ea;
  color: #fff;
  font-weight: bold;
}

.item-list input {
  appearance: none;
  display: block;
  width: 11px;
  height: 11px;
  background-color: #fff;
  border: 1px solid #a9a9a9;
}

.item-list input:checked::before {
  content: "";
  display: block;
  width: 9px;
  height: 9px;
  background-color: #222;
  clip-path: polygon(5% 45%, 25% 40%, 40% 60%, 80% 5%, 98% 10%, 45% 95%, 35% 95%);
}

.hgrip {
  width: 31px;
  height: 5px;
  flex: none;
  align-self: center;
  background: radial-gradient(#bbb 40%, transparent 50%) 0 1px / 3px 3px;
}

.tabs {
  display: flex;
  align-items: flex-end;
  height: 20px;
  flex: none;
  border-bottom: 1px solid #a9a9a9;
}

.tab {
  height: 17px;
  padding: 0 7px;
  background: linear-gradient(#d2d2d2, #c2c2c2);
  border: 1px solid #a9a9a9;
  border-bottom: none;
  border-radius: 3px 3px 0 0;
}

.tab.current {
  height: 20px;
  margin-bottom: -1px;
  background: #dedede;
  border-top: 2px solid #3f6fc4;
}

.heading {
  height: 18px;
  flex: none;
  padding-left: 3px;
  background-color: #c6c6c6;
  font-weight: bold;
  line-height: 17px;
}

.scroll {
  display: flex;
  flex: 1;
  min-height: 0;
  overflow: hidden;
}

.form {
  flex: 1;
  padding: 0 9px;
}

.group {
  display: flex;
  flex-direction: column;
  gap: 5px;
  padding: 10px 9px 9px;
  border: 1px solid #bfbfbf;
  border-top: none;
  box-shadow: 1px 1px 0 #f0f0f0;
}

.group.first {
  padding-top: 3px;
}

.row {
  display: flex;
  align-items: center;
  height: 21px;
}

.row label {
  width: 78px;
}

.field {
  display: flex;
  position: relative;
  flex: 1;
  height: 21px;
}

.field input, .field select {
  width: 100%;
  min-width: 0;
  height: 21px;
  padding: 0 4px;
  border: 1px solid #8f8f8f;
  border-radius: 3px;
  color: #2e2e2e;
}

.field input {
  background-color: #f9f9f9;
  border-radius: 3px 0 0 3px;
}

.field select {
  appearance: none;
  padding: 0 3px;
  background: linear-gradient(#ebebeb, #d9d9d9);
  opacity: 1;
}

.field select.with-icon {
  padding-left: 19px;
}

.field.off select {
  border-color: #b0b0b0;
  color: #9b9b9b;
}

.field.off svg {
  opacity: 0.6;
}

.option-icon {
  position: absolute;
  left: 4px;
  top: 5px;
  width: 14px;
  height: 12px;
}

.updown {
  position: absolute;
  right: 1px;
  top: 2px;
  width: 16px;
  height: 17px;
  padding: 2px 4px;
  border-left: 1px solid #c4c4c4;
}

.spin {
  display: flex;
  flex-direction: column;
  width: 12px;
  flex: none;
}

.spin button {
  display: flex;
  align-items: center;
  justify-content: center;
  flex: 1;
  border: 1px solid #8f8f8f;
  border-left: none;
  background-color: #e3e3e3;
}

.spin button + button {
  border-top: none;
}

.spin svg, .scroll-up svg {
  width: 7px;
  height: 5px;
  fill: #444;
}

.group-title {
  display: flex;
  align-items: center;
  height: 14px;
  margin-top: 7px;
  color: #303030;
}

.group-title svg {
  margin-right: 7px;
}

.group-title::after {
  content: "";
  flex: 1;
  margin-left: 6px;
  border-top: 1px solid #bfbfbf;
  border-bottom: 1px solid #f0f0f0;
}

.font-button {
  height: 22px;
  margin-bottom: 1px;
  border: 1px solid #8f8f8f;
  border-radius: 3px;
  background: linear-gradient(#ebebeb, #d9d9d9);
}

.color-label {
  width: 103px;
  white-space: nowrap;
}

.swatch {
  width: 84px;
  height: 21px;
  padding: 3px;
  border: 1px solid #8f8f8f;
  border-radius: 3px;
  background-color: #e6e6e6;
}

.swatch span {
  display: block;
  height: 13px;
  border-radius: 2px;
}

.black {
  background-color: #000;
}

.blue {
  background-color: #178dbf;
}

.light {
  background-color: #a5cde3;
}

.drop {
  width: 10px;
  height: 21px;
  border: 1px solid #8f8f8f;
  border-radius: 3px;
  background-color: #e3e3e3;
}

.drop::before {
  content: "";
  display: block;
  width: 8px;
  height: 4px;
  background-color: #444;
  clip-path: polygon(8% 0, 92% 0, 50% 100%);
}

.scrollbar {
  display: flex;
  flex-direction: column;
  width: 12px;
  margin: 1px 1px 0 0;
  background-color: #c4c4c4;
  border: 1px solid #a3a3a3;
  border-bottom: none;
}

.scroll-up {
  display: flex;
  align-items: center;
  justify-content: center;
  height: 11px;
  background-color: #e6e6e6;
  border-bottom: 1px solid #a3a3a3;
}

.thumb {
  height: 110px;
  margin-top: 135px;
  background: repeating-linear-gradient(#aaa 0 1px, #e9e9e9 1px 3px) center / 6px 7px no-repeat #e3e3e3;
  border: solid #969696;
  border-width: 1px 0;
}
```
FILE: script.js
```js
// kilometre markers along the trail
const markers = [
  [725, 142], [610, 175], [530, 257], [430, 308], [447, 370], [500, 440], [412, 490], [477, 527],
  [582, 561], [657, 631], [773, 643], [677, 728], [717, 719], [770, 709], [669, 773], [830, 95],
  [944, 60], [1105, 42], [1107, 120], [1128, 198], [1048, 235], [952, 282], [907, 370], [940, 390],
  [920, 465], [847, 527], [799, 588], [790, 605], [845, 663]
];

document.getElementById('markers').innerHTML = markers.map(([x, y]) =>
  `<use href="#marker" x="${x - 10}" y="${y - 12}" width="20" height="24"/>`
).join('');
```
